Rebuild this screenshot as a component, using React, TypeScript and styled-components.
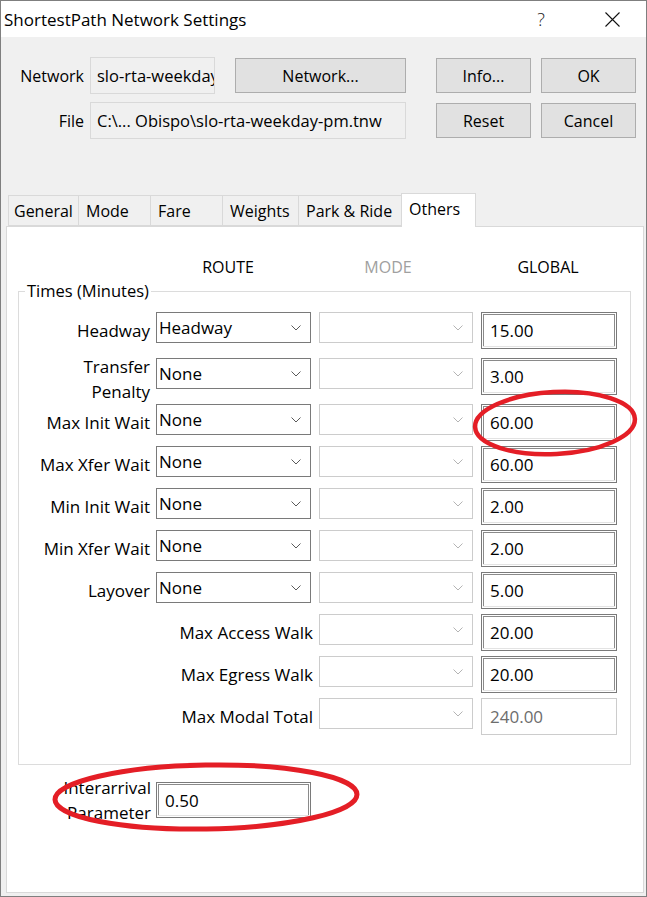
import React from 'react';
import styled, { createGlobalStyle } from 'styled-components';

const Global = createGlobalStyle`
  html, body { margin: 0; padding: 0; background: #ffffff; }
  body { font-family: "Open Sans", "Noto Sans", sans-serif; color: #000; }
  * { box-sizing: border-box; }
`;

const Window = styled.div`
  position: relative;
  width: 647px;
  height: 897px;
  border: 1px solid #7f7f7f;
  background: #f0f0f0;
  display: flex;
  flex-direction: column;
  overflow: hidden;
`;

const TitleBar = styled.div`
  height: 36px;
  flex: none;
  background: #ffffff;
  display: flex;
  align-items: center;
  padding-left: 3px;
  font-size: 17px;
`;

const TitleText = styled.div`
  flex: 1;
`;

const TitleButton = styled.div`
  width: 46px;
  height: 36px;
  display: flex;
  align-items: center;
  justify-content: center;
  font-size: 18px;
  font-weight: 300;
  color: #222;
`;

const TitleButtons = styled.div`
  display: flex;
  gap: 25px;
  margin-right: 11px;
`;

const Body = styled.div`
  flex: 1;
  display: flex;
  flex-direction: column;
  padding: 20px 2px 3px 0;
  min-height: 0;
`;

const TopSection = styled.div`
  display: flex;
  align-items: flex-start;
`;

const FieldGrid = styled.div`
  display: grid;
  grid-template-columns: 83px auto;
  column-gap: 6px;
  row-gap: 8px;
`;

const TopLabel = styled.div`
  height: 37px;
  display: flex;
  align-items: center;
  justify-content: flex-end;
  font-size: 16px;
`;

const FieldLine = styled.div`
  display: flex;
  align-items: center;
  gap: 20px;
`;

const ReadBox = styled.div<{ $w: number }>`
  width: ${p => p.$w}px;
  height: 37px;
  border: 1px solid #d9d9d9;
  background: #f0f0f0;
  padding-left: 6px;
  display: flex;
  align-items: center;
  font-size: 16.5px;
  white-space: nowrap;
  overflow: hidden;
`;

const Button = styled.div<{ $w?: number }>`
  width: ${p => (p.$w ? `${p.$w}px` : 'auto')};
  height: 35px;
  background: #e1e1e1;
  border: 1px solid #adadad;
  display: flex;
  align-items: center;
  justify-content: center;
  font-size: 16px;
`;

const ButtonGrid = styled.div`
  display: grid;
  grid-template-columns: 95px 95px;
  grid-auto-rows: 35px;
  column-gap: 10px;
  row-gap: 10px;
  margin-left: 30px;
  margin-top: 1px;
`;

const TabStrip = styled.div`
  display: flex;
  align-items: flex-end;
  height: 33px;
  margin: 54px 0 0 7px;
  flex: none;
`;

const Tab = styled.div<{ $w: number; $active?: boolean }>`
  position: relative;
  width: ${p => p.$w}px;
  height: ${p => (p.$active ? 34 : 31)}px;
  margin-left: -1px;
  margin-bottom: ${p => (p.$active ? -1 : 0)}px;
  z-index: ${p => (p.$active ? 1 : 0)};
  border: 1px solid #d9d9d9;
  border-bottom: ${p => (p.$active ? 'none' : '1px solid #d9d9d9')};
  background: ${p => (p.$active ? '#ffffff' : '#f0f0f0')};
  padding: ${p => (p.$active ? '0 0 3px 7px' : '0 0 0 7px')};
  display: flex;
  align-items: center;
  font-size: 16px;
  white-space: nowrap;
  &:first-child { margin-left: 0; padding-left: 5px; }
`;

const Panel = styled.div`
  flex: 1;
  margin-left: 5px;
  background: #ffffff;
  border: 1px solid #d9d9d9;
  display: flex;
  flex-direction: column;
  padding-top: 29px;
`;

const HeaderRow = styled.div`
  display: grid;
  grid-template-columns: repeat(3, 120px);
  column-gap: 40px;
  padding-left: 161px;
  height: 22px;
  line-height: 22px;
`;

const ColumnHead = styled.div<{ $disabled?: boolean }>`
  text-align: center;
  font-size: 16px;
  color: ${p => (p.$disabled ? '#a0a0a0' : '#000')};
`;

const Group = styled.fieldset`
  margin: 2px 12px 0 11px;
  border: 1px solid #dcdcdc;
  padding: 10px 0 24px 0;
  min-width: 0;
`;

const Legend = styled.legend`
  margin-left: 6px;
  padding: 0 2px;
  font-size: 16.5px;
  line-height: 22px;
`;

const FieldRow = styled.div<{ $tall?: boolean }>`
  display: grid;
  grid-template-columns: 129px 155px 154px 136px;
  column-gap: 8px;
  align-items: start;
  height: ${p => (p.$tall ? 50 : 42)}px;
  --ctl-offset: ${p => (p.$tall ? 4 : 0)}px;
`;

const RowLabel = styled.div<{ $span?: boolean; $tall?: boolean }>`
  grid-column: ${p => (p.$span ? '1 / 3' : 'auto')};
  height: ${p => (p.$tall ? 50 : 37)}px;
  display: flex;
  align-items: center;
  justify-content: flex-end;
  text-align: right;
  font-size: 17px;
  line-height: 25px;
  margin-right: -2px;
`;

const Dropdown = styled.div<{ $disabled?: boolean }>`
  margin-top: var(--ctl-offset);
  height: 31px;
  border: 1px solid ${p => (p.$disabled ? '#cccccc' : '#7a7a7a')};
  background: #ffffff;
  display: flex;
  align-items: center;
  padding: 0 9px 0 2px;
  font-size: 17px;
  color: ${p => (p.$disabled ? '#a0a0a0' : '#000')};
`;

const DropValue = styled.span`
  flex: 1;
`;

const Edit = styled.div<{ $disabled?: boolean; $h?: number }>`
  margin-top: var(--ctl-offset, 0px);
  height: ${p => p.$h ?? 37}px;
  border: 1px solid ${p => (p.$disabled ? '#cccccc' : '#7a7a7a')};
  box-shadow: ${p =>
    p.$disabled
      ? 'none'
      : 'inset 0 0 0 1px #ffffff, inset 0 -1px 0 1px #e3e3e3, inset 0 0 0 2px #8a8a8a'};
  background: #ffffff;
  display: flex;
  align-items: center;
  padding-left: 8px;
  font-size: 17px;
  color: ${p => (p.$disabled ? '#6d6d6d' : '#000')};
`;

const ParamRow = styled.div`
  display: grid;
  grid-template-columns: 143px 155px;
  column-gap: 6px;
  align-items: center;
  margin-top: 10px;
`;

const ParamLabel = styled.div`
  text-align: right;
  font-size: 17px;
  line-height: 25px;
  margin-right: -1px;
`;

const Annotations = styled.svg`
  position: absolute;
  left: -1px;
  top: -1px;
  width: 647px;
  height: 897px;
  pointer-events: none;
`;

const Chevron: React.FC<{ color: string }> = ({ color }) => (
  <svg width="10" height="6" viewBox="0 0 10 6">
    <path d="M0.5 0.5 L5 5 L9.5 0.5" fill="none" stroke={color} strokeWidth="1" />
  </svg>
);

type RowDef = {
  label: React.ReactNode;
  route?: string;
  global: string;
  tall?: boolean;
  disabledGlobal?: boolean;
};

const rows: RowDef[] = [
  { label: 'Headway', route: 'Headway', global: '15.00' },
  { label: <>Transfer<br />Penalty</>, route: 'None', global: '3.00', tall: true },
  { label: 'Max Init Wait', route: 'None', global: '60.00' },
  { label: 'Max Xfer Wait', route: 'None', global: '60.00' },
  { label: 'Min Init Wait', route: 'None', global: '2.00' },
  { label: 'Min Xfer Wait', route: 'None', global: '2.00' },
  { label: 'Layover', route: 'None', global: '5.00' },
  { label: 'Max Access Walk', global: '20.00' },
  { label: 'Max Egress Walk', global: '20.00' },
  { label: 'Max Modal Total', global: '240.00', disabledGlobal: true },
];

const tabs = [
  { name: 'General', w: 71 },
  { name: 'Mode', w: 73 },
  { name: 'Fare', w: 73 },
  { name: 'Weights', w: 77 },
  { name: 'Park & Ride', w: 104 },
  { name: 'Others', w: 75, active: true },
];

export default function App() {
  return (
    <>
      <Global />
      <Window>
        <TitleBar>
          <TitleText>ShortestPath Network Settings</TitleText>
          <TitleButtons>
            <TitleButton>?</TitleButton>
            <TitleButton>
              <svg width="15" height="15" viewBox="0 0 15 15">
                <path d="M0.5 0.5 L14.5 14.5 M14.5 0.5 L0.5 14.5" stroke="#111" strokeWidth="1.1" />
              </svg>
            </TitleButton>
          </TitleButtons>
        </TitleBar>
        <Body>
          <TopSection>
            <FieldGrid>
              <TopLabel>Network</TopLabel>
              <FieldLine>
                <ReadBox $w={125}>slo-rta-weekday-pm</ReadBox>
                <Button $w={171}>Network...</Button>
              </FieldLine>
              <TopLabel>File</TopLabel>
              <ReadBox $w={316}>C:\... Obispo\slo-rta-weekday-pm.tnw</ReadBox>
            </FieldGrid>
            <ButtonGrid>
              <Button>Info...</Button>
              <Button>OK</Button>
              <Button>Reset</Button>
              <Button>Cancel</Button>
            </ButtonGrid>
          </TopSection>

          <TabStrip>
            {tabs.map(t => (
              <Tab key={t.name} $w={t.w} $active={t.active}>
                {t.name}
              </Tab>
            ))}
          </TabStrip>

          <Panel>
            <HeaderRow>
              <ColumnHead>ROUTE</ColumnHead>
              <ColumnHead $disabled>MODE</ColumnHead>
              <ColumnHead>GLOBAL</ColumnHead>
            </HeaderRow>
            <Group>
              <Legend>Times (Minutes)</Legend>
              {rows.map((r, i) => (
                <FieldRow key={i} $tall={r.tall}>
                  <RowLabel $span={!r.route} $tall={r.tall}>
                    {r.label}
                  </RowLabel>
                  {r.route && (
                    <Dropdown>
                      <DropValue>{r.route}</DropValue>
                      <Chevron color="#5a5a5a" />
                    </Dropdown>
                  )}
                  <Dropdown $disabled>
                    <DropValue />
                    <Chevron color="#b4b4b4" />
                  </Dropdown>
                  <Edit $disabled={r.disabledGlobal}>{r.global}</Edit>
                </FieldRow>
              ))}
            </Group>
            <ParamRow>
              <ParamLabel>
                Interarrival
                <br />
                Parameter
              </ParamLabel>
              <Edit $h={36}>0.50</Edit>
            </ParamRow>
          </Panel>
        </Body>

        <Annotations viewBox="0 0 647 897">
          <ellipse
            cx="555"
            cy="423"
            rx="80"
            ry="31"
            fill="none"
            stroke="#e41e26"
            strokeWidth="4.5"
            transform="rotate(-3 555 423)"
          />
          <ellipse
            cx="206"
            cy="797"
            rx="151"
            ry="32"
            fill="none"
            stroke="#e41e26"
            strokeWidth="5"
            transform="rotate(-1 206 797)"
          />
        </Annotations>
      </Window>
    </>
  );
}
